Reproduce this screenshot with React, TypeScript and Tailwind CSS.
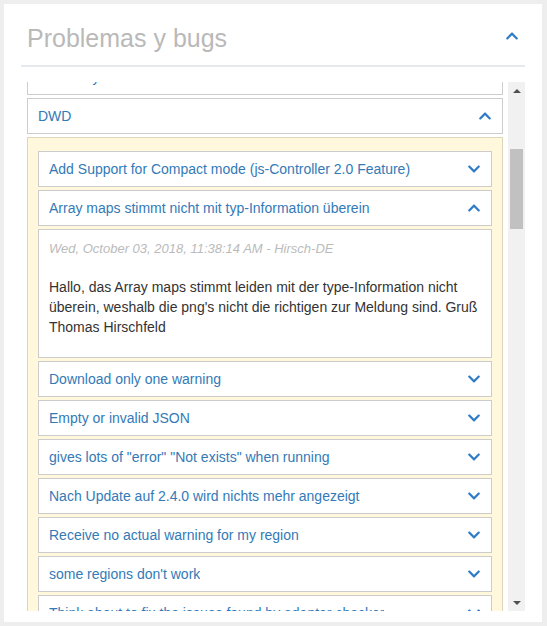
import { FaChevronDown, FaChevronUp } from "react-icons/fa";

const ISSUES = [
  { title: "Add Support for Compact mode (js-Controller 2.0 Feature)" },
  {
    title: "Array maps stimmt nicht mit typ-Information überein",
    open: true,
    date: "Wed, October 03, 2018, 11:38:14 AM - Hirsch-DE",
    body: "Hallo, das Array maps stimmt leiden mit der type-Information nicht überein, weshalb die png's nicht die richtigen zur Meldung sind. Gruß Thomas Hirschfeld",
  },
  { title: "Download only one warning" },
  { title: "Empty or invalid JSON" },
  { title: 'gives lots of "error" "Not exists" when running' },
  { title: "Nach Update auf 2.4.0 wird nichts mehr angezeigt" },
  { title: "Receive no actual warning for my region" },
  { title: "some regions don't work" },
  { title: "Think about to fix the issues found by adapter checker" },
];

function Chevron({ open }: { open?: boolean }) {
  const Icon = open ? FaChevronUp : FaChevronDown;
  return <Icon size={14} className="shrink-0 text-[#2f7bc6]" />;
}

function Row({ title, open }: { title: string; open?: boolean }) {
  return (
    <div className="flex h-[36px] shrink-0 items-center justify-between border border-[#cccccc] bg-white pl-[10px] pr-[10px]">
      <span className="truncate text-[14px] text-[#337ab7]">{title}</span>
      <Chevron open={open} />
    </div>
  );
}

function Scrollbar() {
  return (
    <div className="flex w-[17px] shrink-0 flex-col bg-[#f1f1f1]">
      <div className="flex h-[17px] items-center justify-center">
        <div className="h-0 w-0 border-x-[4px] border-b-[4px] border-x-transparent border-b-[#505050]" />
      </div>
      <div className="flex-1 px-[2px] pt-[50px]">
        <div className="h-[80px] bg-[#c1c1c1]" />
      </div>
      <div className="flex h-[17px] items-center justify-center">
        <div className="h-0 w-0 border-x-[4px] border-t-[4px] border-x-transparent border-t-[#505050]" />
      </div>
    </div>
  );
}

export default function App() {
  return (
    <div
      className="min-h-[626px] bg-[#eeeeee] p-[4px]"
      style={{ fontFamily: '"Liberation Sans", Arial, sans-serif' }}
    >
      <div className="flex h-[618px] w-[538px] flex-col bg-white px-[17px] pt-[19px]">
        <div className="flex items-start justify-between border-b-2 border-[#e6eaee] px-[6px] pb-[12px]">
          <h2 className="text-[25px] leading-[30px] text-[#b9b9b9]">Problemas y bugs</h2>
          <span className="mt-[6px]">
            <Chevron open />
          </span>
        </div>

        <div className="mt-[15px] flex h-[529px] overflow-hidden">
          <div className="min-w-0 flex-1 pl-[6px] pr-[5px]">
            <div className="-mt-[23px] flex flex-col gap-[3px]">
              <Row title="Discovery" />
              <Row title="DWD" open />
              <div className="flex flex-col gap-[3px] border border-[#ded6b9] bg-[#fff8dc] px-[10px] pt-[13px] pb-[10px]">
                {ISSUES.map((it) => (
                  <div key={it.title} className="flex flex-col gap-[3px]">
                    <Row title={it.title} open={it.open} />
                    {it.open && (
                      <div className="border border-[#cccccc] bg-white px-[10px] pt-[10px] pb-[20px]">
                        <div className="mb-[20px] text-[13px] italic leading-[17px] text-[#bbbbbb]">
                          {it.date}
                        </div>
                        <p className="text-[14px] leading-[20px] text-[#333333]">{it.body}</p>
                      </div>
                    )}
                  </div>
                ))}
              </div>
            </div>
          </div>
          <Scrollbar />
        </div>
      </div>
    </div>
  );
}
